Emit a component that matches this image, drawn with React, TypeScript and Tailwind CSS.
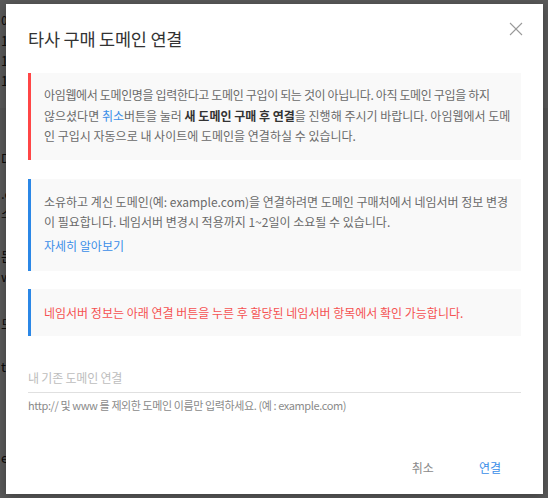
import React from 'react';

const font = { fontFamily: '"Noto Sans CJK KR", "Noto Sans", sans-serif' };

function BackgroundPage() {
  // page that sits behind the dimmed overlay; only its edges show
  return (
    <div className="flex flex-col bg-white text-[13px] text-[#222] h-[498px] overflow-hidden">
      <div className="flex flex-col gap-[2px] pt-[12px] pl-[1px] leading-[18px]">
        <span>에이</span>
        <span>1일</span>
        <span>1일</span>
        <span>1일</span>
      </div>
      <div className="h-[22px] mt-[18px] bg-[#f0f0f0]" />
      <div className="flex flex-col pt-[20px] pl-[1px] leading-[17px]">
        <span>더보기</span>
        <span className="mt-[18px]">.com</span>
        <span className="mt-[2px]">소유</span>
        <span className="mt-[26px]">문의</span>
        <span className="mt-[4px]">www</span>
        <span className="mt-[30px]">도메</span>
        <span className="mt-[26px]">test</span>
        <span className="mt-[74px]">e</span>
      </div>
    </div>
  );
}

function CloseIcon() {
  return (
    <svg width="14" height="14" viewBox="0 0 14 14" fill="none" stroke="#9a9a9a" strokeWidth="1.1">
      <line x1="1" y1="1" x2="13" y2="13" />
      <line x1="13" y1="1" x2="1" y2="13" />
    </svg>
  );
}

export default function App() {
  return (
    <div className="relative w-[548px] h-[498px] overflow-hidden" style={font}>
      <BackgroundPage />
      {/* dim overlay */}
      <div className="absolute inset-0 bg-black/65" />

      {/* modal */}
      <div className="absolute left-[6px] top-[4px] w-[537px] h-[490px] bg-white shadow-[0_2px_10px_rgba(0,0,0,0.3)] flex flex-col px-[22px] pt-[22px]">
        <button className="absolute right-[20px] top-[18px] p-0">
          <CloseIcon />
        </button>

        <h2 className="text-[17.5px] leading-[26px] font-normal text-[#333] tracking-[-0.2px]">타사 구매 도메인 연결</h2>

        <div className="mt-[21px] bg-[#f9f9f9] border-l-[3px] border-[#ff4646] pl-[13px] pr-[4px] pt-[12px] pb-[13px] text-[12px] leading-[20.5px] text-[#6a6a6a] whitespace-nowrap">
          <span className="tracking-[-0.35px]">
            아임웹에서 도메인명을 입력한다고 도메인 구입이 되는 것이 아닙니다. 아직 도메인 구입을 하지
          </span>
          <br />
          않으셨다면 <span className="text-[#3b8ee8]">취소</span>버튼을 눌러{' '}
          <b className="font-bold text-[#333]">새 도메인 구매 후 연결</b>을 진행해 주시기 바랍니다. 아임웹에서 도메
          <br />
          인 구입시 자동으로 내 사이트에 도메인을 연결하실 수 있습니다.
        </div>

        <div className="mt-[19px] bg-[#f9f9f9] border-l-[3px] border-[#2b87e6] pl-[13px] pr-[4px] pt-[13px] pb-[15px] text-[12px] leading-[20.5px] text-[#6a6a6a] whitespace-nowrap">
          <p>
            소유하고 계신 도메인(예: example.com)을 연결하려면 도메인 구매처에서 네임서버 정보 변경
            <br />
            이 필요합니다. 네임서버 변경시 적용까지 1~2일이 소요될 수 있습니다.
          </p>
          <a className="block mt-[3px] text-[#3b8ee8]">자세히 알아보기</a>
        </div>

        <div className="mt-[18px] bg-[#f9f9f9] border-l-[3px] border-[#2b87e6] pl-[13px] pr-[4px] py-[13px] text-[12px] leading-[21px] text-[#f55252] whitespace-nowrap">
          네임서버 정보는 아래 연결 버튼을 누른 후 할당된 네임서버 항목에서 확인 가능합니다.
        </div>

        <div className="mt-[28px] flex flex-col">
          <div className="border-b border-[#e0e0e0] pb-[4px]">
            <input
              className="w-full outline-none text-[12px] leading-[20px] tracking-[-0.2px] text-[#333] placeholder:text-[#bdbdbd] bg-transparent"
              placeholder="내 기존 도메인 연결"
            />
          </div>
          <p className="mt-[4px] text-[11px] leading-[16px] tracking-[-0.4px] text-[#8a8a8a] whitespace-nowrap">
            http:// 및 www 를 제외한 도메인 이름만 입력하세요. (예 : example.com)
          </p>
        </div>

        <div className="mt-auto mb-[8px] flex justify-end gap-[8px]">
          <button className="h-[36px] px-[17px] text-[12px] text-[#8a8a8a]">취소</button>
          <button className="h-[36px] px-[20px] text-[12px] text-[#3b8ee8]">연결</button>
        </div>
      </div>
    </div>
  );
}
